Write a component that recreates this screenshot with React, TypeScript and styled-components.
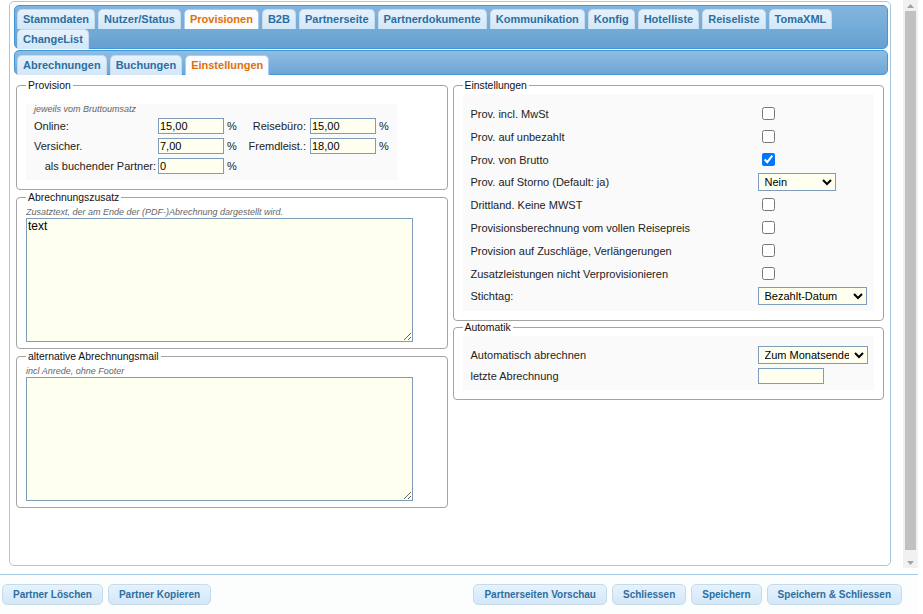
import React from "react";
import styled, { createGlobalStyle, css } from "styled-components";

const GlobalStyle = createGlobalStyle`
  html, body {
    margin: 0;
    padding: 0;
    background: #fff;
    font-family: "Liberation Sans", Arial, sans-serif;
    color: #222;
  }
  * { box-sizing: border-box; }
`;

const Page = styled.div`
  width: 918px;
  height: 614px;
  display: flex;
  flex-direction: column;
`;

const ScrollArea = styled.div`
  height: 568px;
  display: flex;
`;

const Viewport = styled.div`
  flex: 1;
  overflow: hidden;
`;

const Scrollbar = styled.div`
  width: 15px;
  display: flex;
  flex-direction: column;
  background: #f1f1f1;
`;

const ScrollArrow = styled.div`
  height: 11px;
  display: flex;
  align-items: center;
  justify-content: center;
`;

const ScrollTrack = styled.div`
  flex: 1;
  padding: 0 2px;
`;

const ScrollThumb = styled.div`
  height: 539px;
  background: #c1c1c1;
`;

const Container = styled.div`
  margin: 1px 0 9px 9px;
  width: 882px;
  height: 565px;
  border: 1px solid #a6c9e2;
  border-radius: 5px;
  padding: 3px 2px 0 4px;
  background: #fff;
`;

const TabBar = styled.div<{ $sub?: boolean }>`
  display: flex;
  flex-wrap: wrap;
  column-gap: 3px;
  row-gap: 1px;
  border: 1px solid #4297d7;
  border-radius: 5px;
  padding: ${(p) => (p.$sub ? "4px" : "3px")} 2px 0;
  margin-top: ${(p) => (p.$sub ? "1px" : "0")};
  background: ${(p) =>
    p.$sub
      ? "linear-gradient(to bottom, #8fbde2 0%, #80b3dc 45%, #6ea6d4 100%)"
      : "linear-gradient(to bottom, #84b5de 0%, #74abd8 50%, #67a1d1 100%)"};
`;

const Tab = styled.div<{ $active?: boolean }>`
  height: 20px;
  line-height: 19px;
  padding: 0 5px;
  margin-bottom: -1px;
  border: 1px solid #c5dbec;
  border-bottom: none;
  border-radius: 5px 5px 0 0;
  font-size: 11px;
  font-weight: bold;
  color: #2e6e9e;
  background: linear-gradient(to bottom, #e6f2fd 0%, #dcedfb 50%, #d3e7f8 100%);
  white-space: nowrap;
  ${(p) =>
    p.$active &&
    css`
      background: #fbfcfd;
      border-color: #a8cdef;
      color: #e17009;
      position: relative;
      z-index: 1;
    `}
`;

const Columns = styled.div`
  display: grid;
  grid-template-columns: minmax(0, 1fr) minmax(0, 1fr);
  column-gap: 5px;
  padding: 4px 4px 0 2px;
`;

const Column = styled.div<{ $gap?: number }>`
  display: flex;
  flex-direction: column;
  gap: ${(p) => p.$gap ?? 0}px;
  min-width: 0;
`;

const Fieldset = styled.fieldset<{ $pb?: number }>`
  margin: 0;
  min-width: 0;
  padding: 0 9px ${(p) => p.$pb ?? 9}px;
  border: 1px solid #a3a3a3;
  border-radius: 4px;
`;

const Legend = styled.legend`
  font-size: 10.4px;
  line-height: 13px;
  padding: 0 2px;
  color: #111;
`;

const Hint = styled.div<{ $mt?: number; $mb?: number }>`
  font-size: 9px;
  line-height: 11px;
  font-style: italic;
  color: #666;
  margin: ${(p) => p.$mt ?? 3}px 0 ${(p) => p.$mb ?? 0}px;
`;

const ProvBox = styled.div`
  width: fit-content;
  margin-top: 2px;
  padding: 0 8px 4px;
  background: #fafafa;
`;

const ProvGrid = styled.div`
  display: grid;
  grid-template-columns: 124px 66px 20px 66px 66px 13px;
  grid-auto-rows: 20px;
  align-items: center;
  font-size: 11px;
`;

const Cell = styled.div<{ $right?: boolean; $pl?: number; $pr?: number }>`
  white-space: nowrap;
  text-align: ${(p) => (p.$right ? "right" : "left")};
  padding-left: ${(p) => p.$pl ?? 0}px;
  padding-right: ${(p) => p.$pr ?? 0}px;
`;

const fieldCss = css`
  border: 1px solid #7f9db9;
  background: #fffff0;
  font-family: "Liberation Sans", Arial, sans-serif;
  font-size: 11px;
  color: #000;
  margin: 0;
`;

const TextInput = styled.input`
  ${fieldCss};
  display: block;
  width: 66px;
  height: 16px;
  padding: 0 1px;
`;

const TextArea = styled.textarea`
  ${fieldCss};
  display: block;
  width: 387px;
  height: 124px;
  padding: 1px 0 0 1px;
  font-size: 12px;
  line-height: 13px;
`;

const Select = styled.select<{ $w: number }>`
  ${fieldCss};
  width: ${(p) => p.$w}px;
  height: 18px;
  padding: 0 2px;
  flex-shrink: 0;
`;

const Check = styled.input`
  width: 13px;
  height: 13px;
  margin: 0 0 0 4px;
`;

const SettingsTable = styled.div`
  margin-top: 2px;
  padding: 8px 4px 4px 8px;
  background: #fafafa;
`;

const Row = styled.div<{ $h: number }>`
  display: flex;
  align-items: center;
  height: ${(p) => p.$h}px;
  font-size: 11px;
`;

const RowLabel = styled.div`
  width: 287px;
  flex-shrink: 0;
  white-space: nowrap;
`;

const Footer = styled.div`
  margin-top: 6px;
  border-top: 1px solid #a6c9e2;
  padding: 9px 16px 0 2px;
  display: flex;
  justify-content: space-between;
  background: #fcfdfd;
  flex: 1;
`;

const ButtonGroup = styled.div`
  display: flex;
  gap: 5px;
`;

const Button = styled.button`
  height: 21px;
  padding: 0 10px;
  border: 1px solid #c5dbec;
  border-radius: 5px;
  background: linear-gradient(to bottom, #e6f2fd 0%, #dcedfb 50%, #d3e7f8 100%);
  color: #2e6e9e;
  font-family: "Liberation Sans", Arial, sans-serif;
  font-size: 10px;
  font-weight: bold;
  white-space: nowrap;
`;

const mainTabs = [
  "Stammdaten",
  "Nutzer/Status",
  "Provisionen",
  "B2B",
  "Partnerseite",
  "Partnerdokumente",
  "Kommunikation",
  "Konfig",
  "Hotelliste",
  "Reiseliste",
  "TomaXML",
  "ChangeList",
];

const subTabs = ["Abrechnungen", "Buchungen", "Einstellungen"];

type Setting =
  | { label: string; kind: "check"; checked?: boolean }
  | { label: string; kind: "select"; value: string; width: number };

const settings: Setting[] = [
  { label: "Prov. incl. MwSt", kind: "check" },
  { label: "Prov. auf unbezahlt", kind: "check" },
  { label: "Prov. von Brutto", kind: "check", checked: true },
  { label: "Prov. auf Storno (Default: ja)", kind: "select", value: "Nein", width: 78 },
  { label: "Drittland. Keine MWST", kind: "check" },
  { label: "Provisionsberechnung vom vollen Reisepreis", kind: "check" },
  { label: "Provision auf Zuschläge, Verlängerungen", kind: "check" },
  { label: "Zusatzleistungen nicht Verprovisionieren", kind: "check" },
  { label: "Stichtag:", kind: "select", value: "Bezahlt-Datum", width: 109 },
];

const Arrow = ({ down }: { down?: boolean }) => (
  <svg width="7" height="4" viewBox="0 0 7 4">
    <polygon points={down ? "0,0 7,0 3.5,4" : "0,4 7,4 3.5,0"} fill="#a3a3a3" />
  </svg>
);

const App = () => {
  return (
    <Page>
      <GlobalStyle />
      <ScrollArea>
        <Viewport>
          <Container>
            <TabBar>
              {mainTabs.map((t) => (
                <Tab key={t} $active={t === "Provisionen"}>{t}</Tab>
              ))}
            </TabBar>
            <TabBar $sub>
              {subTabs.map((t) => (
                <Tab key={t} $active={t === "Einstellungen"}>{t}</Tab>
              ))}
            </TabBar>

            <Columns>
              <Column $gap={1}>
                <Fieldset>
                  <Legend>Provision</Legend>
                  <ProvBox>
                    <Hint $mt={12} $mb={1}>jeweils vom Bruttoumsatz</Hint>
                    <ProvGrid>
                      <Cell>Online:</Cell>
                      <TextInput defaultValue="15,00" />
                      <Cell $pl={3}>%</Cell>
                      <Cell $right $pr={4}>Reisebüro:</Cell>
                      <TextInput defaultValue="15,00" />
                      <Cell $pl={3}>%</Cell>

                      <Cell>Versicher.</Cell>
                      <TextInput defaultValue="7,00" />
                      <Cell $pl={3}>%</Cell>
                      <Cell $right $pr={4}>Fremdleist.:</Cell>
                      <TextInput defaultValue="18,00" />
                      <Cell $pl={3}>%</Cell>

                      <Cell $right $pr={2}>als buchender Partner:</Cell>
                      <TextInput defaultValue="0" />
                      <Cell $pl={3}>%</Cell>
                    </ProvGrid>
                  </ProvBox>
                </Fieldset>

                <Fieldset $pb={6}>
                  <Legend>Abrechnungszusatz</Legend>
                  <Hint>Zusatztext, der am Ende der (PDF-)Abrechnung dargestellt wird.</Hint>
                  <TextArea defaultValue="text" />
                </Fieldset>

                <Fieldset $pb={6}>
                  <Legend>alternative Abrechnungsmail</Legend>
                  <Hint>incl Anrede, ohne Footer</Hint>
                  <TextArea defaultValue="" />
                </Fieldset>
              </Column>

              <Column>
                <Fieldset>
                  <Legend>Einstellungen</Legend>
                  <SettingsTable>
                    {settings.map((s) => (
                      <Row key={s.label} $h={s.kind === "select" ? 22 : 23}>
                        <RowLabel>{s.label}</RowLabel>
                        {s.kind === "check" ? (
                          <Check type="checkbox" defaultChecked={s.checked} />
                        ) : (
                          <Select $w={s.width} defaultValue={s.value}>
                            <option>{s.value}</option>
                          </Select>
                        )}
                      </Row>
                    ))}
                  </SettingsTable>
                </Fieldset>

                <Fieldset>
                  <Legend>Automatik</Legend>
                  <SettingsTable>
                    <Row $h={21}>
                      <RowLabel>Automatisch abrechnen</RowLabel>
                      <Select $w={110} defaultValue="Zum Monatsende">
                        <option>Zum Monatsende</option>
                      </Select>
                    </Row>
                    <Row $h={21}>
                      <RowLabel>letzte Abrechnung</RowLabel>
                      <TextInput defaultValue="" />
                    </Row>
                  </SettingsTable>
                </Fieldset>
              </Column>
            </Columns>
          </Container>
        </Viewport>
        <Scrollbar>
          <ScrollArrow>
            <Arrow />
          </ScrollArrow>
          <ScrollTrack>
            <ScrollThumb />
          </ScrollTrack>
          <ScrollArrow>
            <Arrow down />
          </ScrollArrow>
        </Scrollbar>
      </ScrollArea>

      <Footer>
        <ButtonGroup>
          <Button>Partner Löschen</Button>
          <Button>Partner Kopieren</Button>
        </ButtonGroup>
        <ButtonGroup>
          <Button>Partnerseiten Vorschau</Button>
          <Button>Schliessen</Button>
          <Button>Speichern</Button>
          <Button>Speichern &amp; Schliessen</Button>
        </ButtonGroup>
      </Footer>
    </Page>
  );
};

export default App;
